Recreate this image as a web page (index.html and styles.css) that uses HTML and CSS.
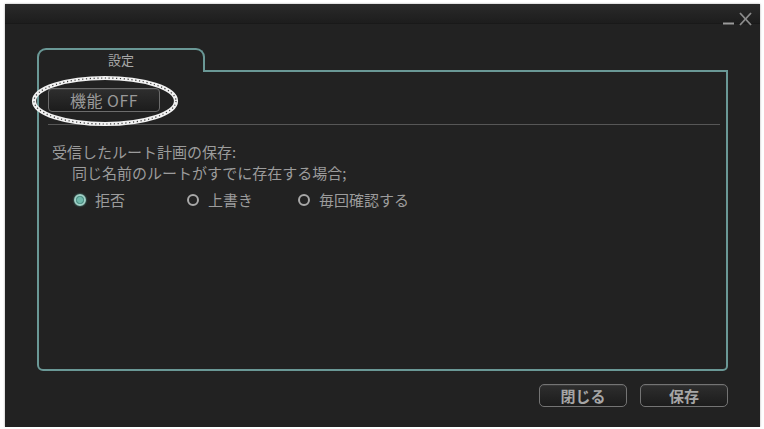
FILE: index.html
```html
<!DOCTYPE html>
<html lang="ja">
<head>
<meta charset="utf-8">
<title>設定</title>
<link rel="stylesheet" href="styles.css">
</head>
<body>
<div class="window">
  <div class="titlebar">
    <svg class="winctl" width="32" height="20" viewBox="0 0 32 20">
      <line x1="1" y1="15.5" x2="12" y2="15.5" stroke="#9a9a9a" stroke-width="2"/>
      <line x1="18" y1="5" x2="29" y2="17" stroke="#8c8c8c" stroke-width="1.8"/>
      <line x1="29" y1="5" x2="18" y2="17" stroke="#8c8c8c" stroke-width="1.8"/>
    </svg>
  </div>
  <div class="content">
    <div class="tab">設定</div>
    <div class="panel">
      <div class="btn btn-func">機能 OFF</div>
      <div class="sep"></div>
      <div class="label">受信したルート計画の保存:</div>
      <div class="label indent">同じ名前のルートがすでに存在する場合;</div>
      <div class="radios">
        <div class="radio-item w1"><span class="radio checked"></span><span>拒否</span></div>
        <div class="radio-item w2"><span class="radio"></span><span>上書き</span></div>
        <div class="radio-item"><span class="radio"></span><span>毎回確認する</span></div>
      </div>
    </div>
    <div class="actions">
      <div class="btn btn-act">閉じる</div>
      <div class="btn btn-act">保存</div>
    </div>
  </div>
  <svg class="callout" width="148" height="52" viewBox="0 0 148 52">
    <ellipse cx="74" cy="26" rx="71" ry="23" fill="none" stroke="#f2f2f2" stroke-width="4.2"/>
    <ellipse cx="74" cy="26" rx="71" ry="23" fill="none" stroke="#3a3a3a" stroke-width="1.2" stroke-dasharray="1.2 2.6"/>
  </svg>
</div>
</body>
</html>
```
FILE: styles.css
```css
html, body {
  margin: 0;
  padding: 0;
  background: #ffffff;
}
body {
  font-family: "Noto Sans CJK JP", "Noto Sans", sans-serif;
  color: #a2a2a2;
}
.window {
  position: relative;
  margin: 4px 0 0 5px;
  width: 755px;
  height: 423px;
  background: #222222;
  box-shadow: 0 0 2px rgba(0,0,0,0.35);
  display: flex;
  flex-direction: column;
}
.titlebar {
  height: 20px;
  background: linear-gradient(#2a2a2a, #1d1d1d);
  border-bottom: 1px solid #191919;
  display: flex;
  justify-content: flex-end;
  padding-right: 6px;
  box-sizing: border-box;
}
.winctl {
  margin-top: 4px;
}
.content {
  padding: 24px 32px 0 32px;
  display: flex;
  flex-direction: column;
}
.tab {
  position: relative;
  z-index: 1;
  width: 164px;
  height: 22px;
  border: 2px solid #6a9896;
  border-bottom: none;
  border-radius: 9px 9px 0 0;
  background: #222222;
  margin-bottom: -2px;
  text-align: center;
  font-size: 13px;
  line-height: 20px;
  color: #a8a8a8;
}
.panel {
  box-sizing: border-box;
  height: 301px;
  border: 2px solid #6a9896;
  border-radius: 0 0 5px 6px;
  padding: 16px 6px 0 9px;
  display: flex;
  flex-direction: column;
}
.btn {
  box-sizing: border-box;
  border: 1px solid #6c6c6c;
  border-radius: 4px;
  background: linear-gradient(#2e2e2e, #1c1c1c);
  box-shadow: inset 0 1px 0 rgba(255,255,255,0.06);
  text-align: center;
  color: #a0a0a0;
}
.btn-func {
  width: 112px;
  height: 24px;
  font-size: 16px;
  line-height: 22px;
  letter-spacing: 0.5px;
  color: #999999;
}
.sep {
  height: 1px;
  background: #575757;
  margin-top: 12px;
}
.label {
  font-size: 15px;
  line-height: 21px;
  padding-left: 4px;
  color: #9c9c9c;
}
.sep + .label {
  margin-top: 16px;
}
.indent {
  padding-left: 24px;
}
.radios {
  display: flex;
  margin-top: 7px;
  padding-left: 26px;
  font-size: 15px;
  line-height: 20px;
  color: #9c9c9c;
}
.radio-item {
  display: flex;
  align-items: center;
  gap: 9px;
}
.w1 { width: 113px; }
.w2 { width: 111px; }
.radio {
  width: 12px;
  height: 12px;
  box-sizing: border-box;
  border: 2px solid #a8a8a8;
  border-radius: 50%;
}
.radio.checked {
  border-color: #9fd0c6;
  background: radial-gradient(circle, #6fb8aa 0 45%, #3f7f75 70%);
  box-shadow: 0 0 2px #5aa89a;
}
.actions {
  display: flex;
  justify-content: flex-end;
  gap: 13px;
  margin-top: 13px;
}
.btn-act {
  width: 88px;
  height: 23px;
  font-size: 15px;
  line-height: 21px;
  font-weight: bold;
  color: #a6a6a6;
  border-color: #747474;
  border-radius: 5px;
}
.callout {
  position: absolute;
  left: 26px;
  top: 71px;
}
```
